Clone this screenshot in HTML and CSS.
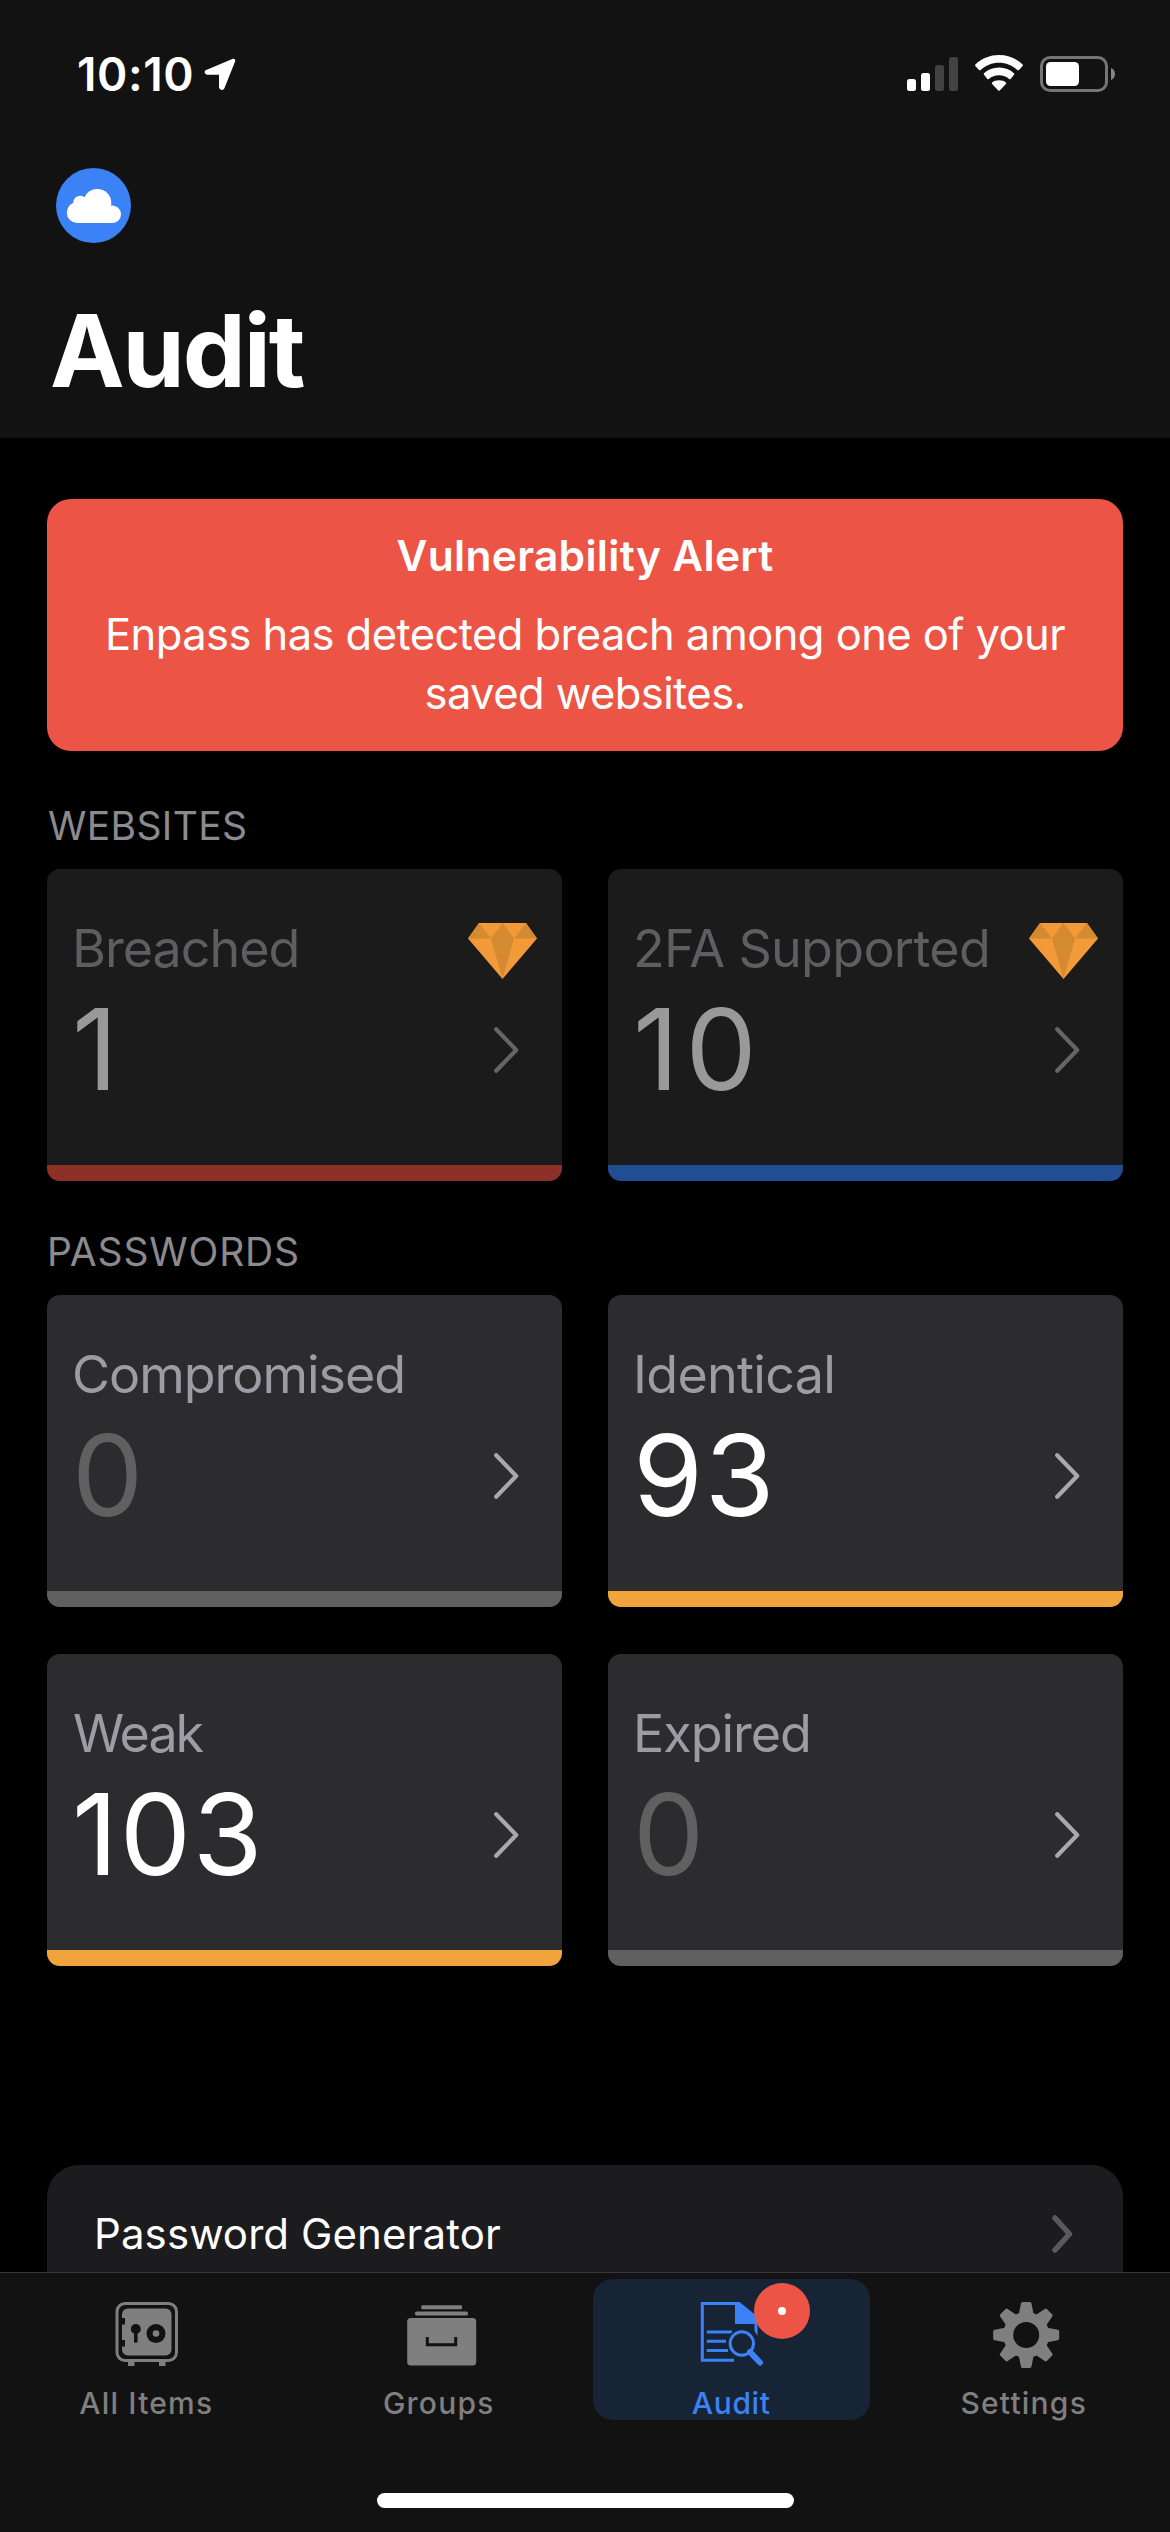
FILE: index.html
```
<!DOCTYPE html>
<html lang="en">
<head>
<meta charset="utf-8">
<title>Audit</title>
<link rel="stylesheet" href="styles.css">
</head>
<body>
<svg class="defs" aria-hidden="true">
  <symbol id="chevron" viewBox="0 0 25 46"><path d="M2.2 2.2 L22.2 23 L2.2 43.8" fill="none" stroke="currentColor" stroke-width="4.2" stroke-linecap="round" stroke-linejoin="round"/></symbol>
  <symbol id="gem" viewBox="0 0 69 56">
    <path d="M11 0H58L69 15.500L34.500 56L0 15.500Z" fill="#f19a37"/>
    <path d="M11 0L23 15.500H0ZM58 0L69 15.500H46ZM34.500 0L46 15.500L34.500 56L23 15.500Z" fill="#d38a31"/>
  </symbol>
</svg>

<header class="header">
  <div class="status">
    <div class="status-left">
      <span class="time">10:10</span>
      <svg class="location" viewBox="0 0 32 33"><path d="M29.500 2.200L2.200 13.600Q2 15.200 3.200 15.200H16.500V29.500Q17.800 31.500 19 29.600L29.800 2.800Z" fill="#fff" stroke="#fff" stroke-width="3" stroke-linejoin="round"/></svg>
    </div>
    <div class="status-right">
      <svg class="signal" viewBox="0 0 51 36">
        <g fill="#fff"><rect y="23" width="9" height="12" rx="2.500"/><rect x="14" y="17" width="9" height="18" rx="2.500"/></g>
        <g fill="#424242"><rect x="28" y="9" width="9" height="26" rx="2.500"/><rect x="42" y="1" width="9" height="34" rx="2.500"/></g>
      </svg>
      <svg class="wifi" viewBox="0 0 48 36" fill="#fff">
        <path d="M24 0C33 0 41.500 3.400 47.600 9.400Q48.300 10.100 47.600 10.900L44 15Q43.200 15.700 42.400 15C37.500 10.400 31 7.700 24 7.700S10.500 10.400 5.600 15Q4.800 15.700 4 15L.4 10.900Q-.3 10.100 .4 9.400C6.500 3.400 15 0 24 0Z"/>
        <path d="M24 12.500C30 12.500 35 14.700 39 18.300Q39.700 19 39 19.800L35.600 23.900Q34.900 24.600 34.100 23.900C31.300 21.500 28 20.200 24 20.200S16.700 21.500 13.900 23.900Q13.100 24.600 12.400 23.900L9 19.800Q8.300 19 9 18.300C13 14.700 18 12.500 24 12.500Z"/>
        <path d="M24 25.200C27 25.200 29.200 26.100 30.900 27.500Q31.600 28.200 30.900 29L24.700 35.400Q24 36 23.300 35.400L17.100 29Q16.400 28.200 17.100 27.500C18.800 26.100 21 25.200 24 25.200Z"/>
      </svg>
      <svg class="battery" viewBox="0 0 76 36">
        <rect x="1.500" y="1.500" width="65" height="33" rx="8.500" fill="none" stroke="#757575" stroke-width="3"/>
        <rect x="6" y="6" width="33" height="24" rx="4.500" fill="#fff"/>
        <path d="M71 12Q75 13.500 75 18T71 24Z" fill="#858585"/>
      </svg>
    </div>
  </div>
  <svg class="cloud" viewBox="0 0 75 75">
    <circle cx="37.500" cy="37.500" r="37.500" fill="#3b82f7"/>
    <g fill="#fff"><circle cx="41.300" cy="35" r="14"/><circle cx="24.200" cy="34.800" r="7"/><circle cx="21.300" cy="44.500" r="10.500"/><circle cx="56.200" cy="46.200" r="8.800"/><path d="M21 36H55L56 55H21Z"/></g>
  </svg>
  <h1 class="title">Audit</h1>
</header>

<main class="content">
  <section class="alert">
    <h2 class="alert-title">Vulnerability Alert</h2>
    <p class="alert-text">Enpass has detected breach among one of your<br>saved websites.</p>
  </section>

  <h3 class="section">WEBSITES</h3>
  <div class="grid">
    <article class="card locked">
      <div class="card-head"><span>Breached</span><svg class="gem"><use href="#gem"/></svg></div>
      <div class="card-value"><span>1</span><svg class="chevron"><use href="#chevron"/></svg></div>
      <div class="bar red"></div>
    </article>
    <article class="card locked">
      <div class="card-head wide"><span>2FA Supported</span><svg class="gem"><use href="#gem"/></svg></div>
      <div class="card-value loose"><span>10</span><svg class="chevron"><use href="#chevron"/></svg></div>
      <div class="bar blue"></div>
    </article>
  </div>

  <h3 class="section passwords">PASSWORDS</h3>
  <div class="grid">
    <article class="card">
      <div class="card-head"><span>Compromised</span></div>
      <div class="card-value zero"><span>0</span><svg class="chevron"><use href="#chevron"/></svg></div>
      <div class="bar"></div>
    </article>
    <article class="card">
      <div class="card-head wide"><span>Identical</span></div>
      <div class="card-value"><span>93</span><svg class="chevron"><use href="#chevron"/></svg></div>
      <div class="bar orange"></div>
    </article>
    <article class="card">
      <div class="card-head narrow"><span>Weak</span></div>
      <div class="card-value"><span>103</span><svg class="chevron"><use href="#chevron"/></svg></div>
      <div class="bar orange"></div>
    </article>
    <article class="card">
      <div class="card-head"><span>Expired</span></div>
      <div class="card-value zero"><span>0</span><svg class="chevron"><use href="#chevron"/></svg></div>
      <div class="bar"></div>
    </article>
  </div>

  <div class="row">
    <span>Password Generator</span>
    <svg class="row-chevron" viewBox="0 0 21 38"><path d="M3 3L17.500 19L3 35" fill="none" stroke="currentColor" stroke-width="5.500" stroke-linecap="round" stroke-linejoin="round"/></svg>
  </div>
</main>

<nav class="tabbar">
  <div class="tabs">
    <a class="tab">
      <svg class="icon" viewBox="0 0 66 66">
        <rect x="4" y="1.500" width="59.500" height="57" rx="8" fill="none" stroke="currentColor" stroke-width="3"/>
        <path d="M15 59h6.500v5H15zM46 59h6.500v5H46z" fill="currentColor"/>
        <rect x="9" y="6.500" width="49.500" height="47" rx="6" fill="currentColor"/>
        <g fill="#121212"><path d="M8 16h4v6.500H8zM8 38h4v6.500H8z"/><circle cx="22.800" cy="27" r="5"/><rect x="21" y="27" width="3.600" height="14" rx="1.800"/><circle cx="43" cy="31.500" r="9.500"/></g>
        <circle cx="43" cy="31.500" r="3.300" fill="currentColor"/>
      </svg>
      <span class="label spread">All Items</span>
    </a>
    <a class="tab">
      <svg class="icon" viewBox="0 0 66 66">
        <g fill="currentColor"><rect x="15.200" y="3.200" width="41" height="4" rx="1.500"/><rect x="9" y="9.600" width="53" height="4" rx="1.500"/><rect x="1.200" y="16" width="69" height="47.500" rx="3.500"/></g>
        <path d="M21.300 35V42.800H49.700V35" fill="none" stroke="#121212" stroke-width="3"/>
      </svg>
      <span class="label spread">Groups</span>
    </a>
    <a class="tab active">
      <svg class="icon" viewBox="0 0 66 66">
        <path d="M36 58.200H4.300V1.500H40" fill="none" stroke="currentColor" stroke-width="3"/>
        <path d="M37 0H41.500L59.500 14.500V34L56.500 29V22H37Z" fill="currentColor"/>
        <path d="M8.800 30H34M8.800 39.300H28M8.800 48.500H30" fill="none" stroke="currentColor" stroke-width="3"/>
        <circle cx="43.800" cy="41.500" r="15" fill="#172435"/>
        <circle cx="43.800" cy="41.500" r="11.700" fill="none" stroke="currentColor" stroke-width="3"/>
        <path d="M52 50L62 60.500" stroke="currentColor" stroke-width="6" stroke-linecap="round"/>
      </svg>
      <span class="label">Audit</span>
      <span class="badge"><i></i></span>
    </a>
    <a class="tab">
      <svg class="icon" viewBox="0 0 66 66">
        <g transform="translate(35.200 33)">
          <g fill="currentColor">
            <path id="tooth" d="M-7.500 -20L-5.300 -31.500Q-5 -33 -3.500 -33H3.500Q5 -33 5.300 -31.500L7.500 -20V20L5.300 31.500Q5 33 3.500 33H-3.500Q-5 33 -5.300 31.500L-7.500 20Z"/>
            <use href="#tooth" transform="rotate(45)"/><use href="#tooth" transform="rotate(90)"/><use href="#tooth" transform="rotate(135)"/>
            <circle r="23"/>
          </g>
          <circle r="13" fill="#121212"/>
        </g>
      </svg>
      <span class="label spread">Settings</span>
    </a>
  </div>
  <div class="home"></div>
</nav>
</body>
</html>
```
FILE: styles.css
```
* { box-sizing: border-box; margin: 0; padding: 0; }
body {
  width: 1170px;
  height: 2532px;
  display: flex;
  flex-direction: column;
  overflow: hidden;
  background: #000;
  color: #fff;
  font-family: Inter, "Liberation Sans", sans-serif;
}
svg { display: block; flex: none; }
.defs { display: none; }

.header {
  height: 438px;
  flex: none;
  background: #121212;
}
.status {
  height: 168px;
  padding: 46px 54px 0 77px;
  display: flex;
  justify-content: space-between;
  align-items: flex-start;
}
.status-left { display: flex; gap: 9px; }
.time { width: 118px; font-size: 46px; line-height: 56px; font-weight: 580; letter-spacing: 0.6px; }
.location { width: 32px; height: 33px; margin-top: 12px; }
.status-right { display: flex; gap: 17px; padding-top: 10px; }
.signal { width: 51px; height: 36px; }
.wifi { width: 48px; height: 36px; margin-top: -1px; }
.battery { width: 76px; height: 36px; }
.cloud { width: 75px; height: 75px; margin-left: 56px; }
.title {
  margin: 48px 0 0 50px;
  font-size: 100px;
  line-height: 120px;
  font-weight: 700;
  letter-spacing: -2.1px;
}

.content {
  flex: 1;
  min-height: 0;
  overflow: hidden;
  padding: 61px 47px 0;
}
.alert {
  height: 252px;
  padding-top: 32px;
  border-radius: 24px;
  background: #ec5545;
  text-align: center;
}
.alert-title { font-size: 42.5px; line-height: 50px; font-weight: 600; letter-spacing: 0.3px; }
.alert-text { margin-top: 24px; font-size: 43.5px; line-height: 59px; letter-spacing: -0.57px; }

.section {
  margin: 51px 0 19px;
  padding-left: 1px;
  font-size: 39px;
  line-height: 48px;
  font-weight: 400;
  letter-spacing: 0.36px;
  color: #8a8a8f;
}
.section.passwords { margin-top: 47px; padding-left: 0; letter-spacing: 0.82px; }

.grid { display: grid; grid-template-columns: 515px 515px; gap: 47px 46px; }
.card {
  height: 312px;
  padding-top: 50px;
  display: flex;
  flex-direction: column;
  overflow: hidden;
  border-radius: 13px;
  background: #2c2c2e;
}
.card-head {
  height: 60px;
  padding: 0 25px;
  display: flex;
  justify-content: space-between;
  font-size: 52px;
  line-height: 60px;
  letter-spacing: -1px;
  color: #9d9ca5;
}
.card-head.wide { letter-spacing: -0.7px; }
.card-head.narrow { padding-left: 26px; letter-spacing: -2px; }
.gem { width: 69px; height: 56px; margin-top: 4px; }
.card-value {
  margin-top: 13px;
  padding: 0 43px 0 25px;
  display: flex;
  justify-content: space-between;
  align-items: center;
  font-size: 113px;
  line-height: 114px;
  letter-spacing: 1.8px;
}
.card-value.loose { letter-spacing: 6.5px; }
.card-value.zero { color: #606060; }
.chevron { width: 25px; height: 46px; margin-top: 1px; color: #a9a9a9; }
.bar { height: 16px; margin-top: auto; background: #606060; }
.red { background: #8c3028; }
.blue { background: #214d93; }
.orange { background: #f1a33c; }
.locked { background: #1b1b1b; }
.locked .card-head { color: #5e5d62; }
.locked .card-value { color: #999; }
.locked .chevron { color: #656565; }

.row {
  height: 138px;
  margin-top: 199px;
  padding: 0 50px 0 47px;
  display: flex;
  align-items: center;
  justify-content: space-between;
  border-radius: 32px;
  background: #1c1c1e;
  font-size: 42px;
  line-height: 50px;
  letter-spacing: 0.1px;
}
.row-chevron { width: 21px; height: 38px; color: #5a5a5e; }

.tabbar {
  height: 260px;
  flex: none;
  padding-top: 6px;
  border-top: 1px solid #38383a;
  background: #121212;
}
.tabs { display: grid; grid-template-columns: repeat(4, 1fr); }
.tab {
  position: relative;
  height: 141px;
  margin: 0 8px;
  padding-top: 23px;
  display: flex;
  flex-direction: column;
  align-items: center;
  border-radius: 20px;
  color: #7f7f7f;
}
.active { background: #172435; color: #3b82f7; }
.icon { width: 66px; height: 66px; overflow: visible; }
.label { margin-top: 17px; font-size: 30px; line-height: 36px; font-weight: 500; letter-spacing: 0.65px; }
.spread { letter-spacing: 1.2px; }
.badge {
  position: absolute;
  left: 161px;
  top: 4px;
  width: 56px;
  height: 56px;
  display: flex;
  align-items: center;
  justify-content: center;
  border-radius: 50%;
  background: #ec5545;
}
.badge i { width: 8px; height: 8px; border-radius: 50%; background: #fff; }
.home { width: 417px; height: 15px; margin: 73px auto 0; border-radius: 8px; background: #fff; }
```
